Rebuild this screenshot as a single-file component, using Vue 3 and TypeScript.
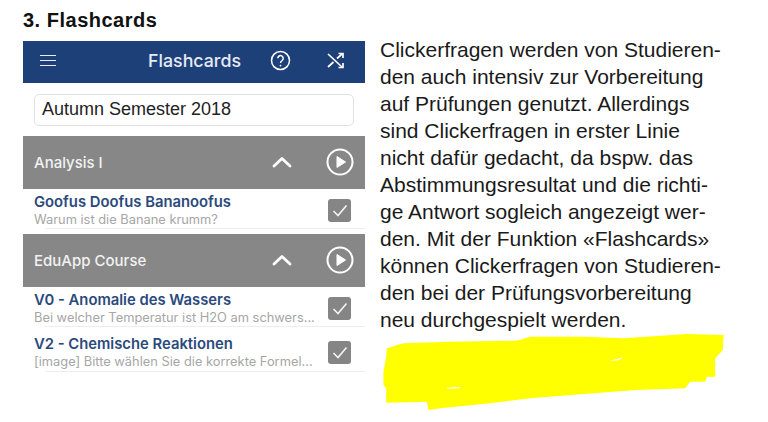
<template>
  <div class="page">
    <div class="left">
      <h3 class="heading">3. Flashcards</h3>
      <div class="phone">
        <div class="topbar">
          <svg class="menu" width="16" height="11" viewBox="0 0 16 11" fill="none" stroke="#e8edf5" stroke-width="1">
            <path d="M0 .5h16M0 5.500h16M0 10.500h16" />
          </svg>
          <span class="topbar-title">Flashcards</span>
          <svg class="help" width="21" height="21" viewBox="0 0 21 21" fill="none" stroke="#fff">
            <circle cx="10.5" cy="10.5" r="9" stroke-width="1.5" />
            <path d="M7.8 8.3a2.7 2.7 0 1 1 4.3 2.2c-1 .7-1.6 1.2-1.6 2.6" stroke-width="1.5" />
            <circle cx="10.5" cy="15.6" r=".9" fill="#fff" stroke="none" />
          </svg>
          <svg class="shuffle" width="18" height="17" viewBox="0 0 18 17" fill="none" stroke="#fff" stroke-width="1.7">
            <path d="M1 2l14 13M1 15l5.5-5M10 6.500l5-4.500" />
            <path d="M11.500 1.500h4.500v4.500M11.500 15.500h4.500v-4.500" />
          </svg>
        </div>
        <div class="select-wrap">
          <div class="select">Autumn Semester 2018</div>
        </div>
        <template v-for="group in groups" :key="group.name">
          <div class="group">
            <span class="group-name">{{ group.name }}</span>
            <svg class="chevron" width="20" height="12" viewBox="0 0 20 12" fill="none" stroke="#fff" stroke-width="2.800" stroke-linecap="round" stroke-linejoin="round">
              <path d="M2 10l8-7.500 8 7.500" />
            </svg>
            <svg class="play" width="28" height="28" viewBox="0 0 28 28" fill="none">
              <circle cx="14" cy="14" r="12.500" stroke="#fff" stroke-width="2" />
              <path d="M11 8.500l8.500 5.500-8.500 5.500z" fill="#fff" stroke="#fff" stroke-width="1" stroke-linejoin="round" />
            </svg>
          </div>
          <div class="rows">
            <div v-for="row in group.rows" :key="row.title" class="row">
              <div class="row-text">
                <div class="row-title">{{ row.title }}</div>
                <div class="row-sub">{{ row.sub }}</div>
              </div>
              <div class="check">
                <svg width="16" height="13" viewBox="0 0 16 13" fill="none" stroke="#f4f4f4" stroke-width="1.600">
                  <path d="M1.500 7l4.500 4.500 8.500-10" />
                </svg>
              </div>
            </div>
          </div>
        </template>
      </div>
    </div>
    <div class="right">
      <p class="copy">
        <span v-for="line in copyLines" :key="line" class="copy-line">{{ line }}</span>
      </p>
      <svg class="scribble" width="347" height="80" viewBox="30 36 1040 240">
        <path
          fill="#ffff00"
          fill-rule="evenodd"
          d="M50 85 L100 70 L240 65 L440 62 L480 50 L640 50 L760 55 L950 42 L1060 45 L1058 90 L1035 115 L1035 170 L1010 170 L1005 185 L960 185 L945 205 L800 210 L640 222 L480 235 L360 250 L210 265 L175 270 L170 245 L48 248 L48 205 L40 195 L40 155 L48 110 Z M228 203 L272 200 L268 205 L235 206 Z M715 124 L760 112 L748 120 Z"
        />
      </svg>
    </div>
  </div>
</template>

<script setup lang="ts">
type Row = { title: string; sub: string };
type Group = { name: string; rows: Row[] };

const groups: Group[] = [
  {
    name: "Analysis I",
    rows: [{ title: "Goofus Doofus Bananoofus", sub: "Warum ist die Banane krumm?" }],
  },
  {
    name: "EduApp Course",
    rows: [
      { title: "V0 - Anomalie des Wassers", sub: "Bei welcher Temperatur ist H2O am schwers..." },
      { title: "V2 - Chemische Reaktionen", sub: "[image] Bitte wählen Sie die korrekte Formel..." },
    ],
  },
];

const copyLines = [
  "Clickerfragen werden von Studieren-",
  "den auch intensiv zur Vorbereitung",
  "auf Prüfungen genutzt. Allerdings",
  "sind Clickerfragen in erster Linie",
  "nicht dafür gedacht, da bspw. das",
  "Abstimmungsresultat und die richti-",
  "ge Antwort sogleich angezeigt wer-",
  "den. Mit der Funktion «Flashcards»",
  "können Clickerfragen von Studieren-",
  "den bei der Prüfungsvorbereitung",
  "neu durchgespielt werden.",
];
</script>

<style>
html,
body {
  margin: 0;
  background: #fff;
}
</style>

<style scoped>
.page {
  width: 768px;
  height: 422px;
  overflow: hidden;
  display: flex;
  font-family: "Liberation Sans", Arial, sans-serif;
  background: #fff;
}

.left {
  width: 342px;
  margin-left: 23px;
  padding-top: 10px;
}

.heading {
  margin: 0 0 10px;
  font-size: 20px;
  line-height: 21px;
  font-weight: 700;
  letter-spacing: 0.5px;
  color: #111;
}

.phone {
  display: flex;
  flex-direction: column;
}

.topbar {
  height: 42px;
  box-sizing: border-box;
  padding-bottom: 4px;
  background: #1e4079;
  display: flex;
  align-items: center;
  color: #fff;
}

.menu {
  margin-left: 17px;
}

.topbar-title {
  margin-left: 92px;
  width: 122px;
  font-family: Inter, "Liberation Sans", sans-serif;
  font-size: 17.800px;
  font-weight: 500;
  color: #e6ebf3;
}

.shuffle {
  margin-left: 36px;
}

.select-wrap {
  padding: 11px 11px 10px;
}

.select {
  height: 30px;
  border: 1px solid #e2e2e2;
  border-radius: 5px;
  padding-left: 7px;
  line-height: 29px;
  font-size: 18px;
  color: #222;
}

.group {
  height: 53px;
  box-sizing: border-box;
  padding: 0 11px 1px;
  background: #878787;
  display: flex;
  align-items: center;
  color: #f2f2f2;
}

.group-name {
  flex: 1;
  font-family: Inter, "Liberation Sans", sans-serif;
  font-size: 15px;
  font-weight: 500;
}

.chevron {
  margin-right: 34px;
}

.rows {
  display: flex;
  flex-direction: column;
  margin-bottom: 5px;
}

.row {
  padding: 5px 14px 0 11px;
  display: flex;
  align-items: center;
  position: relative;
}

.row + .row {
  padding-top: 9px;
  padding-bottom: 1px;
}

.row-text {
  flex: 1;
  min-width: 0;
}

.row-title {
  font-family: Inter, "Liberation Sans", sans-serif;
  font-size: 14.800px;
  line-height: 17px;
  font-weight: 600;
  color: #2b4a7c;
}

.row-sub {
  font-family: Inter, "Liberation Sans", sans-serif;
  font-size: 12.850px;
  line-height: 18px;
  color: #a6a6a6;
  white-space: nowrap;
}

.row::after {
  content: "";
  position: absolute;
  left: 22px;
  right: 0;
  bottom: 0;
  height: 1px;
  background: #ededed;
}

.check {
  width: 23px;
  height: 23px;
  margin-bottom: 2px;
  border-radius: 3px;
  background: #858585;
  display: flex;
  align-items: center;
  justify-content: center;
}

.right {
  margin-left: 15px;
  padding-top: 36px;
}

.copy {
  margin: 0;
}

.copy-line {
  display: block;
  font-size: 21px;
  line-height: 27px;
  color: #1a1a1a;
  white-space: nowrap;
}

.scribble {
  display: block;
  margin-top: -1px;
}
</style>
